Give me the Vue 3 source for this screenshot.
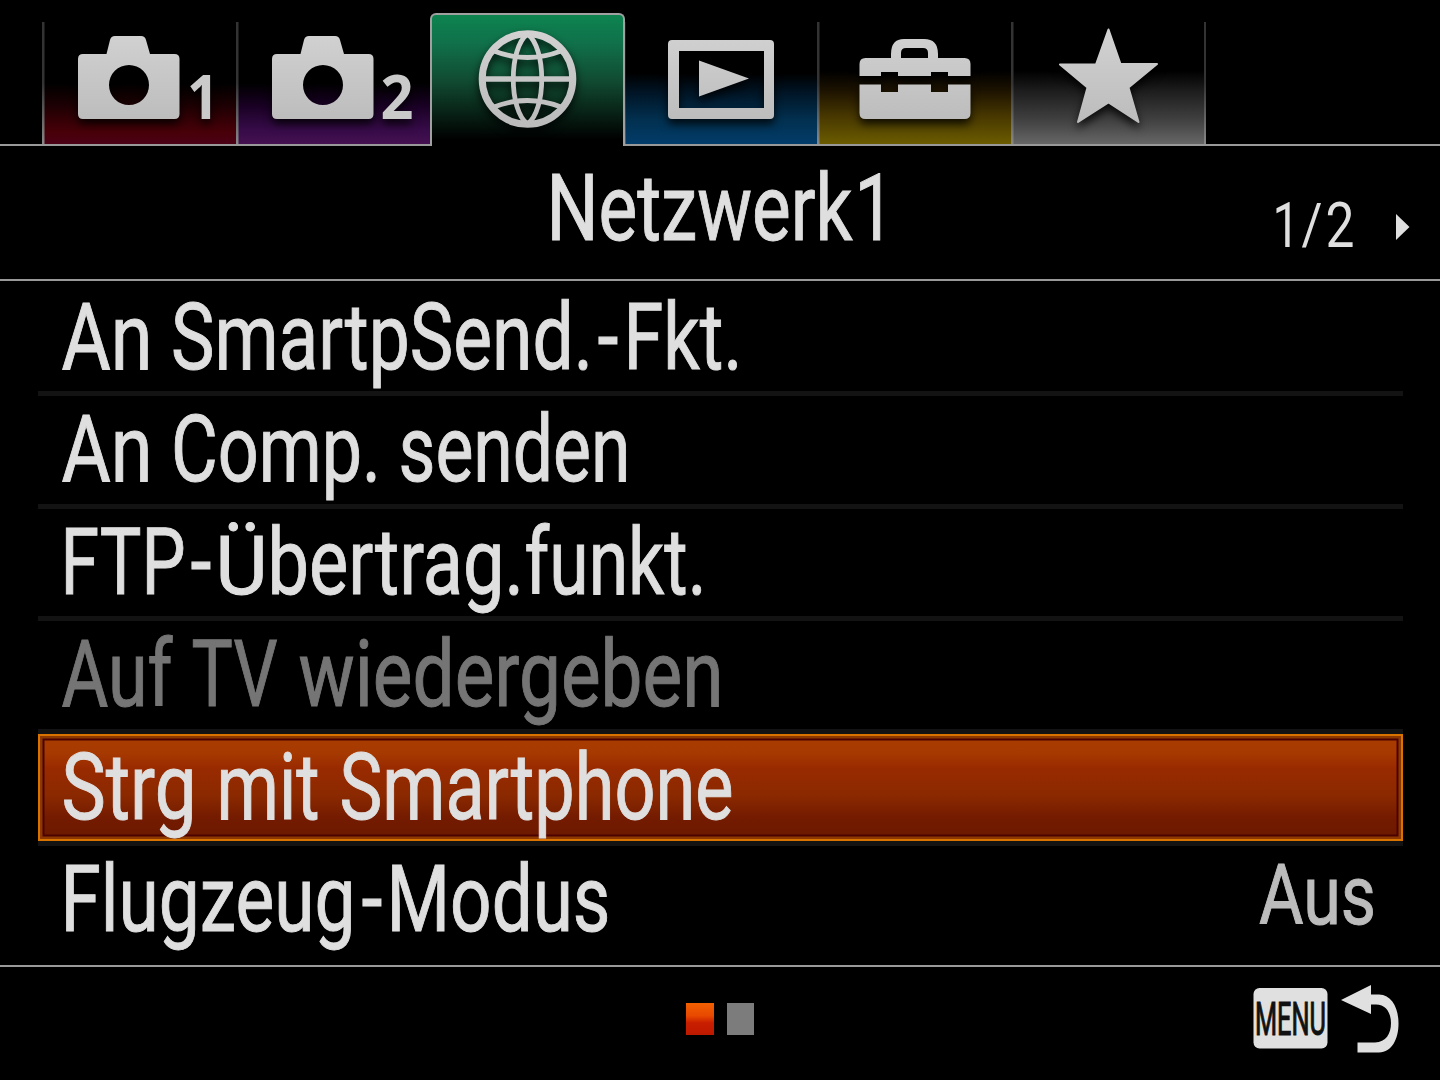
<script setup>
// Condenses a text element horizontally so that its advance width equals the given one.
const vFit = {
  mounted(el, { value }) {
    const natural = el.getComputedTextLength()
    if (natural > 0) {
      el.setAttribute('transform', `translate(${value.x} ${value.y}) scale(${value.w / natural} 1)`)
    }
  },
}

const BASE = 84.5

const rows = [
  { words: [{ t: 'An', x: 61, w: 91 }, { t: 'SmartpSend.', x: 170.5, w: 422 }, { t: '-', x: 597, w: 21 }, { t: 'Fkt.', x: 623, w: 119 }] },
  { words: [{ t: 'An', x: 61, w: 91 }, { t: 'Comp.', x: 170.5, w: 210 }, { t: 'senden', x: 398, w: 232 }] },
  { words: [{ t: 'FTP', x: 60, w: 125 }, { t: '-', x: 190, w: 21 }, { t: 'Ü', x: 215, w: 52, low: true }, { t: 'bertrag.', x: 267, w: 256.5 }, { t: 'funkt.', x: 524, w: 182 }] },
  { words: [{ t: 'Auf', x: 61, w: 111 }, { t: 'TV', x: 191, w: 86 }, { t: 'wiedergeben', x: 298, w: 425 }], disabled: true },
  { words: [{ t: 'Strg', x: 61, w: 135 }, { t: 'mit', x: 216, w: 103 }, { t: 'Smartphone', x: 339, w: 394 }], selected: true },
  { words: [{ t: 'Flugzeug', x: 60, w: 295 }, { t: '-', x: 361, w: 21 }, { t: 'Modus', x: 386, w: 224 }], value: 'Aus' },
]

const tabs = [
  { id: 'camera1', color: 'red' },
  { id: 'camera2', color: 'purple' },
  { id: 'network', color: 'green' },
  { id: 'playback', color: 'blue' },
  { id: 'setup', color: 'yellow' },
  { id: 'star', color: 'gray' },
]
</script>

<template>
  <div class="screen">
    <nav class="tabs">
      <div v-for="tab in tabs" :key="tab.id" class="tab" :class="[tab.color, { active: tab.id === 'network' }]">
        <svg class="icon" width="194" height="122" viewBox="0 22 194 122">
          <defs>
            <linearGradient id="metal" x1="0" y1="30" x2="0" y2="122" gradientUnits="userSpaceOnUse">
              <stop offset="0" stop-color="#d2d2d2" />
              <stop offset="1" stop-color="#bcbcbc" />
            </linearGradient>
          </defs>
          <g v-if="tab.id === 'camera1' || tab.id === 'camera2'" fill="url(#metal)">
            <path fill-rule="evenodd" d="M41 54H64.500L68 40Q69 36 73 36H99Q103 36 104 40L108 54H132.500Q137.500 54 137.500 59V114Q137.500 119 132.500 119H41Q36 119 36 114V59Q36 54 41 54ZM87 65A20 20 0 1 0 87 105A20 20 0 1 0 87 65Z" />
            <text v-if="tab.id === 'camera1'" v-fit="{ x: 145, y: 119, w: 32 }" class="num">1</text>
            <text v-else v-fit="{ x: 144.5, y: 119, w: 33 }" class="num">2</text>
          </g>
          <g v-else-if="tab.id === 'network'" fill="none" stroke="url(#metal)">
            <circle cx="97.500" cy="79" r="45.300" stroke-width="7" />
            <path stroke-width="5.500" d="M52 79H143.100" />
            <path stroke-width="4.800" d="M97.500 34C78.500 48 78.500 110 97.500 124C116.500 110 116.500 48 97.500 34Z" />
            <path stroke-width="4.800" d="M64 51Q97.500 64 131 51M64 107Q97.500 94 131 107" />
          </g>
          <g v-else-if="tab.id === 'playback'" fill="url(#metal)">
            <path fill-rule="evenodd" d="M49 40H147Q151 40 151 44V115Q151 119 147 119H49Q45 119 45 115V44Q45 40 49 40ZM56 51V108H141V51Z" />
            <path d="M76 60.500L126 78.500L76 96.500Z" />
          </g>
          <g v-else-if="tab.id === 'setup'" fill="url(#metal)">
            <path fill-rule="evenodd" d="M48.500 58H74V54Q74 39 87 39H107Q121 39 121 54V58H147.500Q153.500 58 153.500 64V76H131V72H114V76H81V72H64V76H42.500V64Q42.500 58 48.500 58ZM84 58H111V53Q111 48 106 48H89Q84 48 84 53Z" />
            <path d="M42.500 84.500H64V92H81V84.500H114V92H131V84.500H153.500V113Q153.500 119 147.500 119H48.500Q42.500 119 42.500 113Z" />
          </g>
          <path v-else fill="url(#metal)" stroke="url(#metal)" stroke-width="2" stroke-linejoin="round" d="M97.500 29.500L109.500 64H146L117.500 87.500L127.500 122L97.500 102.500L67 122L76.500 87.500L49 64.500H85Z" />
        </svg>
      </div>
    </nav>

    <header class="header">
      <svg width="1440" height="133" viewBox="0 146 1440 133">
        <text v-fit="{ x: 546.5, y: 239.5, w: 306 }" class="title">Netzwerk</text>
        <text v-fit="{ x: 854.5, y: 239.5, w: 40 }" class="title">1</text>
        <text v-fit="{ x: 1272.5, y: 247, w: 27 }" class="page">1</text>
        <text v-fit="{ x: 1301.5, y: 243.5, w: 21 }" class="page slash">/</text>
        <text v-fit="{ x: 1325.5, y: 247, w: 29 }" class="page">2</text>
        <path fill="#e0e0e0" d="M1396 214L1409.500 227L1396 240Z" />
      </svg>
    </header>

    <main class="list">
      <div v-for="(row, i) in rows" :key="i" class="row" :class="{ selected: row.selected, disabled: row.disabled }">
        <svg class="label" width="1365" height="107.500" viewBox="37.500 0 1365 107.500">
          <text v-for="word in row.words" :key="word.x" v-fit="{ x: word.x, y: BASE, w: word.w }" :class="{ low: word.low }">{{ word.t }}</text>
          <text v-if="row.value" v-fit="{ x: 1258.5, y: 77.5, w: 117 }" class="value">{{ row.value }}</text>
        </svg>
      </div>
    </main>

    <footer class="footer">
      <div class="dots"><i class="dot on"></i><i class="dot"></i></div>
      <div class="back">
        <svg width="146" height="70" viewBox="1253 984 146 70">
          <rect x="1253.500" y="988" width="74" height="60.500" rx="6" fill="#e0e0e0" />
          <text v-fit="{ x: 1255, y: 1035, w: 71 }" class="menu">MENU</text>
          <path fill="#e0e0e0" d="M1341 1000L1371 985V994.500H1379C1392 995 1398.500 1008 1398.500 1023.500C1398.500 1039 1392 1052 1379 1052.500H1357.500V1042.500H1375C1386 1042 1391 1034 1391 1023C1391 1013 1386 1004.500 1376 1004.500H1371V1014Z" />
        </svg>
      </div>
    </footer>
  </div>
</template>

<style>
body {
  margin: 0;
  background: #000;
}
</style>

<style scoped>
.screen {
  width: 1440px;
  height: 1080px;
  background: #000;
  overflow: hidden;
  font-family: Roboto, "Liberation Sans", sans-serif;
  display: flex;
  flex-direction: column;
}
svg {
  display: block;
}
text {
  fill: #dfdfdf;
  stroke: #dfdfdf;
  stroke-width: 1px;
  font-size: 93px;
}
.tabs {
  box-sizing: border-box;
  height: 146px;
  flex: none;
  padding-left: 42px;
  display: flex;
  align-items: flex-end;
  background: linear-gradient(#999, #999) bottom / 100% 2px no-repeat;
}
.tab {
  box-sizing: border-box;
  width: 193.800px;
  flex: none;
  height: 124px;
  padding-bottom: 2px;
  background:
    linear-gradient(#333 0%, #333 50%, #888 100%) left top / 2.500px 122px no-repeat,
    var(--fade) left top / 100% 122px no-repeat;
}
.tab:last-child {
  width: 195.500px;
  background:
    linear-gradient(#333 0%, #333 50%, #888 100%) left top / 2.500px 122px no-repeat,
    linear-gradient(#333 0%, #333 50%, #888 100%) right top / 2px 122px no-repeat,
    var(--fade) left top / 100% 122px no-repeat;
}
.red { --fade: linear-gradient(#000 50%, #1c0003 68%, #480008 90%, #4b0016); }
.purple { --fade: linear-gradient(#000 50%, #180022 68%, #360b48 88%, #451050); }
.blue { --fade: linear-gradient(#000 42%, #001526 58%, #02304f 80%, #023c6a); }
.yellow { --fade: linear-gradient(#000 40%, #1c1200 56%, #493900 78%, #6b5c00); }
.gray { --fade: linear-gradient(#000 40%, #1c1c1c 56%, #404040 80%, #666); }
.tab.active {
  width: 195.800px;
  margin-right: -2px;
  height: 133px;
  padding-top: 7px;
  padding-bottom: 0;
  border: 2px solid #a0a0a0;
  border-bottom: 0;
  border-radius: 6px 6px 0 0;
  position: relative;
  background: linear-gradient(#0d8450 0%, #10704a 22%, #114b32 50%, #082317 74%, #000 95%);
}
.icon {
  filter: drop-shadow(0 5px 4px rgba(0, 0, 0, 0.8));
}
.active .icon {
  margin-left: -2px;
}
.num {
  font-family: "Noto Sans", "Open Sans", sans-serif;
  font-weight: 700;
  font-size: 61px;
  fill: #cacaca;
  stroke: none;
}
.header {
  height: 133px;
  flex: none;
  border-bottom: 2px solid #999;
}
.page {
  font-size: 63px;
  stroke-width: 0;
}
.slash {
  font-size: 58px;
}
.low {
  font-size: 82px;
}
.list {
  box-sizing: border-box;
  height: 684px;
  flex: none;
  padding: 2.500px 37.500px 0;
  display: flex;
  flex-direction: column;
}
.row {
  box-sizing: border-box;
  height: 112.500px;
  flex: none;
  border-bottom: 5px solid #131313;
}
.row:last-child {
  border-bottom-color: transparent;
}
.label {
  overflow: visible;
}
.disabled text {
  fill: #757575;
  stroke: #757575;
}
.value {
  font-size: 84px;
  fill: #bcbcbc;
  stroke: #bcbcbc;
}
.selected .label {
  box-shadow: inset 0 0 0 2px #d97300, inset 0 0 0 4.500px #8c3800, inset 0 0 0 6.500px #4c0300;
  background: linear-gradient(#a83c00 6%, #a63900 18%, #992a00 32%, #8a2900 58%, #741b00 78%, #6c1900 96%);
}
.footer {
  height: 115px;
  flex: none;
  border-top: 2px solid #999;
  display: grid;
  grid-template-columns: 1fr auto 1fr;
  box-sizing: border-box;
}
.dots {
  grid-column: 2;
  display: flex;
  gap: 13px;
  padding-top: 36px;
}
.dot {
  width: 27.500px;
  height: 32px;
  background: #7c7c7c;
}
.dot.on {
  background: linear-gradient(#f36000, #e74900 40%, #c91e00 62%, #bd1900);
}
.back {
  justify-self: end;
  padding: 17px 41px 0 0;
}
.menu {
  font-size: 46px;
  fill: #111;
  stroke: #111;
  stroke-width: 1.200px;
}
</style>
